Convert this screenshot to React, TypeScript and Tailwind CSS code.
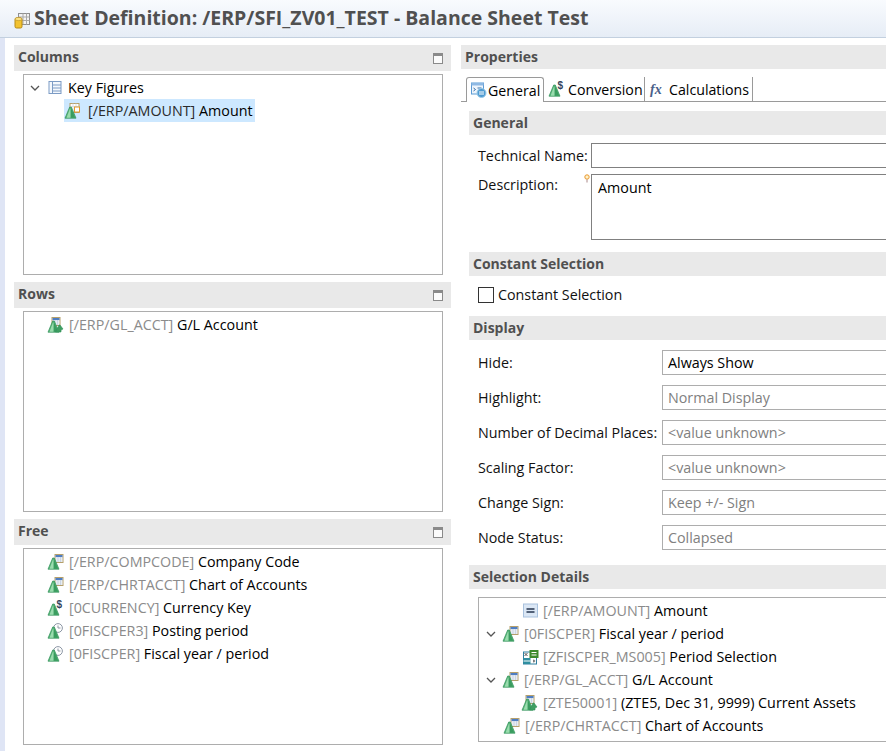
import type { ReactNode } from "react";

const FONT = "font-['Open_Sans','Noto_Sans',sans-serif]";
const LABEL = "text-[14.3px] text-[#111]";

function Triangle() {
  return (
    <g>
      <path d="M0.5 15.2 L5.2 4 L6.8 4 L11.5 15.2 Z" fill="#55b376" stroke="#2f9159" strokeWidth="0.7" />
      <path d="M6 5 L6.5 5 L10.6 14.7 L6 14.7 Z" fill="#3a9c5f" />
      <path d="M5.5 5.5 L6 5.5 L6 14.7 L2 14.7 Z" fill="#9adcae" />
    </g>
  );
}

function MiniTable({ x = 7, y = 0 }: { x?: number; y?: number }) {
  return (
    <g transform={`translate(${x} ${y})`}>
      <rect x="0.5" y="0.5" width="8" height="8" fill="#fff" stroke="#b59f6b" />
      <rect x="1" y="1" width="7" height="2.2" fill="#4f7ec2" />
      <path d="M1 5h7M1 7h7M3.5 3v5M6 3v5" stroke="#c3cfe0" strokeWidth="0.8" />
    </g>
  );
}

type IconKind = "amount" | "hier" | "table" | "dollar" | "clock";

function TreeIcon({ kind }: { kind: IconKind }) {
  return (
    <svg width="17" height="16" viewBox="0 0 16 16" className="-ml-[1px] mr-[1px] shrink-0">
      {kind === "table" && <MiniTable />}
      {kind === "hier" && <MiniTable x={4} />}
      {kind === "amount" && (
        <g>
          <rect x="5.5" y="0.5" width="9" height="9" fill="#fff" stroke="#b59f6b" />
          <path d="M5.5 3.5h9M8.5 0.5v9M11.5 0.5v3" stroke="#cfd5dc" strokeWidth="0.8" />
          <rect x="10" y="4" width="5" height="5" fill="#fff" stroke="#e29a2f" />
        </g>
      )}
      {kind === "clock" && (
        <g>
          <circle cx="10.5" cy="5" r="4.4" fill="#fff" stroke="#8d97a5" />
          <path d="M10.5 2.5v2.5h2.5" stroke="#8d97a5" fill="none" />
        </g>
      )}
      {kind === "dollar" && (
        <text x="9" y="8" fontSize="10" fontWeight="700" fill="#33435c" fontFamily="Liberation Sans, sans-serif">
          $
        </text>
      )}
      <Triangle />
      {kind === "hier" && <path d="M8 15l3.5-7 1 0 3 4-2 1v2z" fill="#3f9e62" stroke="#2f9159" strokeWidth="0.6" />}
    </svg>
  );
}

function Chevron() {
  return (
    <svg width="10" height="8" viewBox="0 0 10 8" className="shrink-0">
      <path d="M1 2l4 4 4-4" fill="none" stroke="#555" strokeWidth="1.3" />
    </svg>
  );
}

function Header({ title, restore, className }: { title: string; restore?: boolean; className: string }) {
  return (
    <div className={`flex items-center justify-between bg-[#e9e9e9] pl-1 pr-2 ${className}`}>
      <span className="text-[14px] font-bold text-[#505050]">{title}</span>
      {restore && (
        <svg width="10" height="11" viewBox="0 0 10 11" className="mt-[3px]">
          <rect x="0.5" y="0.5" width="9" height="10" fill="#fbfbfb" stroke="#8a8a8a" />
          <rect x="1" y="1" width="8" height="2" fill="#8a8a8a" />
        </svg>
      )}
    </div>
  );
}

function Row({
  id,
  label,
  icon,
  selected,
  toggle,
  indent,
}: {
  id?: string;
  label: string;
  icon: ReactNode;
  selected?: boolean;
  toggle?: boolean;
  indent: string;
}) {
  return (
    <div className={`flex h-[23px] items-center ${indent}`}>
      {toggle && (
        <span className="mr-[7px]">
          <Chevron />
        </span>
      )}
      <div className={`flex h-[23px] items-center ${selected ? "gap-[6px] bg-[#cde8ff] pl-[1px] pr-[2px]" : "gap-[4px]"}`}>
        {icon}
        <span className="whitespace-nowrap text-[14.3px] text-black">
          {id && <span className={selected ? "text-[#2b2b2b]" : "text-[#8b8b8b]"}>{id} </span>}
          {label}
        </span>
      </div>
    </div>
  );
}

function LeftPanel({ title, height, children }: { title: string; height: string; children: ReactNode }) {
  return (
    <div>
      <Header title={title} restore className="h-[26px] w-[437px] pb-[3px]" />
      <div className={`ml-[9px] mt-[3px] w-[420px] border border-[#adadad] bg-white pt-[1px] ${height}`}>{children}</div>
    </div>
  );
}

function Field({ label, value, active }: { label: string; value: string; active?: boolean }) {
  return (
    <div className="flex h-[25px] items-center">
      <span className={`w-[193px] whitespace-nowrap pl-[9px] ${LABEL}`}>{label}</span>
      <div className="flex h-[25px] flex-1 items-center border border-[#adadad] pl-[5px]">
        <span className={`text-[14.3px] ${active ? "text-black" : "text-[#808080]"}`}>{value}</span>
      </div>
    </div>
  );
}

function GeneralTabIcon() {
  return (
    <svg width="17" height="16" viewBox="0 0 16 16" className="shrink-0">
      <rect x="1" y="1" width="12" height="11" fill="#eef5fc" stroke="#5b9bd5" />
      <rect x="1" y="1" width="12" height="2.5" fill="#8fb9e3" />
      <path d="M3 6l2 1.5L3 9M7 6h4" stroke="#3a6ea5" fill="none" />
      <circle cx="11" cy="11" r="4.5" fill="#4f9bd1" stroke="#9ccbe8" />
      <path d="M8.5 10h5M8.5 12h5" stroke="#fff" />
    </svg>
  );
}

export default function App() {
  return (
    <div className={`relative h-[751px] w-[886px] overflow-hidden bg-white text-black ${FONT}`}>
      <div className="flex h-[38px] items-center border-b border-[#c3d0df] bg-gradient-to-b from-[#f9fbfe] to-[#e6edf6] pl-[14px]">
        <svg width="16" height="18" viewBox="0 0 16 18" className="mr-[4px] mt-[3px] shrink-0">
          <rect x="4.5" y="2.5" width="11" height="11" fill="#f3f3f3" stroke="#8f8f8f" />
          <path d="M4.5 6h11M4.5 9.5h11M9 2.5v11M12.5 2.5v11" stroke="#a9a9a9" />
          <rect x="1" y="7" width="7" height="10" rx="1.5" fill="#f2c230" stroke="#b58a17" />
          <ellipse cx="4.5" cy="8" rx="3.5" ry="1.6" fill="#fbe286" stroke="#b58a17" strokeWidth="0.6" />
        </svg>
        <span className="whitespace-nowrap pb-[1px] text-[19.5px] font-bold text-[#505050]">
          Sheet Definition: /ERP/SFI_ZV01_TEST - Balance Sheet Test
        </span>
      </div>

      <div className="flex h-[713px]">
        <div className="w-[5px] shrink-0 bg-[#dfe5f5]" />
        <div className="flex w-[456px] shrink-0 flex-col gap-[7px] pl-[9px] pt-[7px]">
          <LeftPanel title="Columns" height="h-[201px]">
            <Row toggle indent="pl-[6px]" label="Key Figures" icon={
              <svg width="17" height="16" viewBox="0 0 16 16" className="shrink-0">
                <rect x="1.5" y="1.5" width="12" height="12" fill="#f4f8fd" stroke="#7d9cc5" />
                <path d="M5 1.5v12M5 5h8.5M5 8h8.5M5 11h8.5" stroke="#7d9cc5" />
              </svg>
            } />
            <Row selected indent="pl-[40px]" id="[/ERP/AMOUNT]" label="Amount" icon={<TreeIcon kind="amount" />} />
          </LeftPanel>
          <LeftPanel title="Rows" height="h-[201px]">
            <Row indent="pl-[24px]" id="[/ERP/GL_ACCT]" label="G/L Account" icon={<TreeIcon kind="hier" />} />
          </LeftPanel>
          <LeftPanel title="Free" height="h-[197px]">
            <Row indent="pl-[24px]" id="[/ERP/COMPCODE]" label="Company Code" icon={<TreeIcon kind="table" />} />
            <Row indent="pl-[24px]" id="[/ERP/CHRTACCT]" label="Chart of Accounts" icon={<TreeIcon kind="table" />} />
            <Row indent="pl-[24px]" id="[0CURRENCY]" label="Currency Key" icon={<TreeIcon kind="dollar" />} />
            <Row indent="pl-[24px]" id="[0FISCPER3]" label="Posting period" icon={<TreeIcon kind="clock" />} />
            <Row indent="pl-[24px]" id="[0FISCPER]" label="Fiscal year / period" icon={<TreeIcon kind="clock" />} />
          </LeftPanel>
        </div>

        <div className="flex w-[470px] shrink-0 flex-col pt-[7px]">
          <Header title="Properties" className="h-[24px] pb-[2px]" />
          <div className="mt-[8px] flex h-[25px] border-b border-[#9a9a9a] pl-[5px]">
            <div className="flex h-[25px] w-[78px] items-center gap-[1px] rounded-t-[3px] border border-b-0 border-[#9a9a9a] bg-white pl-[3px]">
              <GeneralTabIcon />
              <span className="pt-[1px] text-[14.2px]">General</span>
            </div>
            <div className="flex h-[24px] w-[101px] items-center gap-[2px] border-r border-[#9a9a9a] pl-[5px]">
              <TreeIcon kind="dollar" />
              <span className="pt-[1px] text-[14.2px]">Conversion</span>
            </div>
            <div className="flex h-[24px] w-[108px] items-center gap-[4px] border-r border-[#9a9a9a] pl-[5px]">
              <span className="w-[15px] font-['Liberation_Serif',serif] text-[14px] font-bold italic text-[#4a5f8a]">fx</span>
              <span className="pt-[1px] text-[14.2px]">Calculations</span>
            </div>
          </div>

          <div className="ml-[8px] mt-[9px] flex flex-col">
            <Header title="General" className="h-[24px] pb-[2px]" />
            <div className="mt-[8px] flex h-[25px] items-center">
              <span className={`w-[122px] whitespace-nowrap pl-[9px] ${LABEL}`}>Technical Name:</span>
              <div className="h-[25px] flex-1 border border-[#808080]" />
            </div>
            <div className="relative mt-[6px] flex h-[66px]">
              <span className={`w-[122px] pl-[9px] ${LABEL}`}>Description:</span>
              <svg width="6" height="9" viewBox="0 0 6 9" className="absolute left-[115px] top-0">
                <circle cx="3" cy="3" r="2.2" fill="#fff3c9" stroke="#e8962e" />
                <path d="M3 5.5v3" stroke="#a88" />
              </svg>
              <div className="flex-1 border border-[#808080] pl-[6px] pt-[2px] text-[14.3px]">Amount</div>
            </div>

            <Header title="Constant Selection" className="mt-[12px] h-[24px] pb-[2px]" />
            <div className="mt-[11px] flex h-[16px] items-center gap-[4px] pl-[9px]">
              <div className="h-[16px] w-[16px] border border-[#333]" />
              <span className={`pb-[1px] ${LABEL}`}>Constant Selection</span>
            </div>

            <Header title="Display" className="mt-[13px] h-[24px] pb-[2px]" />
            <div className="mt-[10px] flex flex-col gap-[10px]">
              <Field label="Hide:" value="Always Show" active />
              <Field label="Highlight:" value="Normal Display" />
              <Field label="Number of Decimal Places:" value="<value unknown>" />
              <Field label="Scaling Factor:" value="<value unknown>" />
              <Field label="Change Sign:" value="Keep +/- Sign" />
              <Field label="Node Status:" value="Collapsed" />
            </div>

            <Header title="Selection Details" className="mt-[15px] h-[24px] pb-[2px]" />
            <div className="ml-[9px] mt-[8px] h-[145px] border border-[#adadad] pt-[1px]">
              <Row indent="pl-[43px]" id="[/ERP/AMOUNT]" label="Amount" icon={
                <svg width="17" height="16" viewBox="0 0 16 16" className="shrink-0">
                  <rect x="1" y="1" width="14" height="13" fill="#dbe7f5" stroke="#a9c2de" />
                  <path d="M4 6h8M4 9h8" stroke="#26364f" strokeWidth="1.4" />
                </svg>
              } />
              <Row toggle indent="pl-[7px]" id="[0FISCPER]" label="Fiscal year / period" icon={<TreeIcon kind="table" />} />
              <Row indent="pl-[43px]" id="[ZFISCPER_MS005]" label="Period Selection" icon={
                <svg width="17" height="16" viewBox="0 0 16 16" className="shrink-0">
                  <rect x="1" y="3" width="13" height="12" fill="#fff" stroke="#2f7f9f" />
                  <rect x="1" y="9" width="7" height="6" fill="#2f8fa0" />
                  <path d="M1 12h7M11 10l2 2-2 2" stroke="#fff" />
                  <path d="M2 4l3 3M5 4L2 7" stroke="#555" />
                  <rect x="7" y="1" width="9" height="8" fill="#3c8a2e" />
                  <path d="M9 3.5h5M9 6h5" stroke="#fff" />
                </svg>
              } />
              <Row toggle indent="pl-[7px]" id="[/ERP/GL_ACCT]" label="G/L Account" icon={<TreeIcon kind="table" />} />
              <Row indent="pl-[43px]" id="[ZTE50001]" label="(ZTE5, Dec 31, 9999) Current Assets" icon={<TreeIcon kind="hier" />} />
              <Row indent="pl-[25px]" id="[/ERP/CHRTACCT]" label="Chart of Accounts" icon={<TreeIcon kind="table" />} />
            </div>
          </div>
        </div>
      </div>
    </div>
  );
}
